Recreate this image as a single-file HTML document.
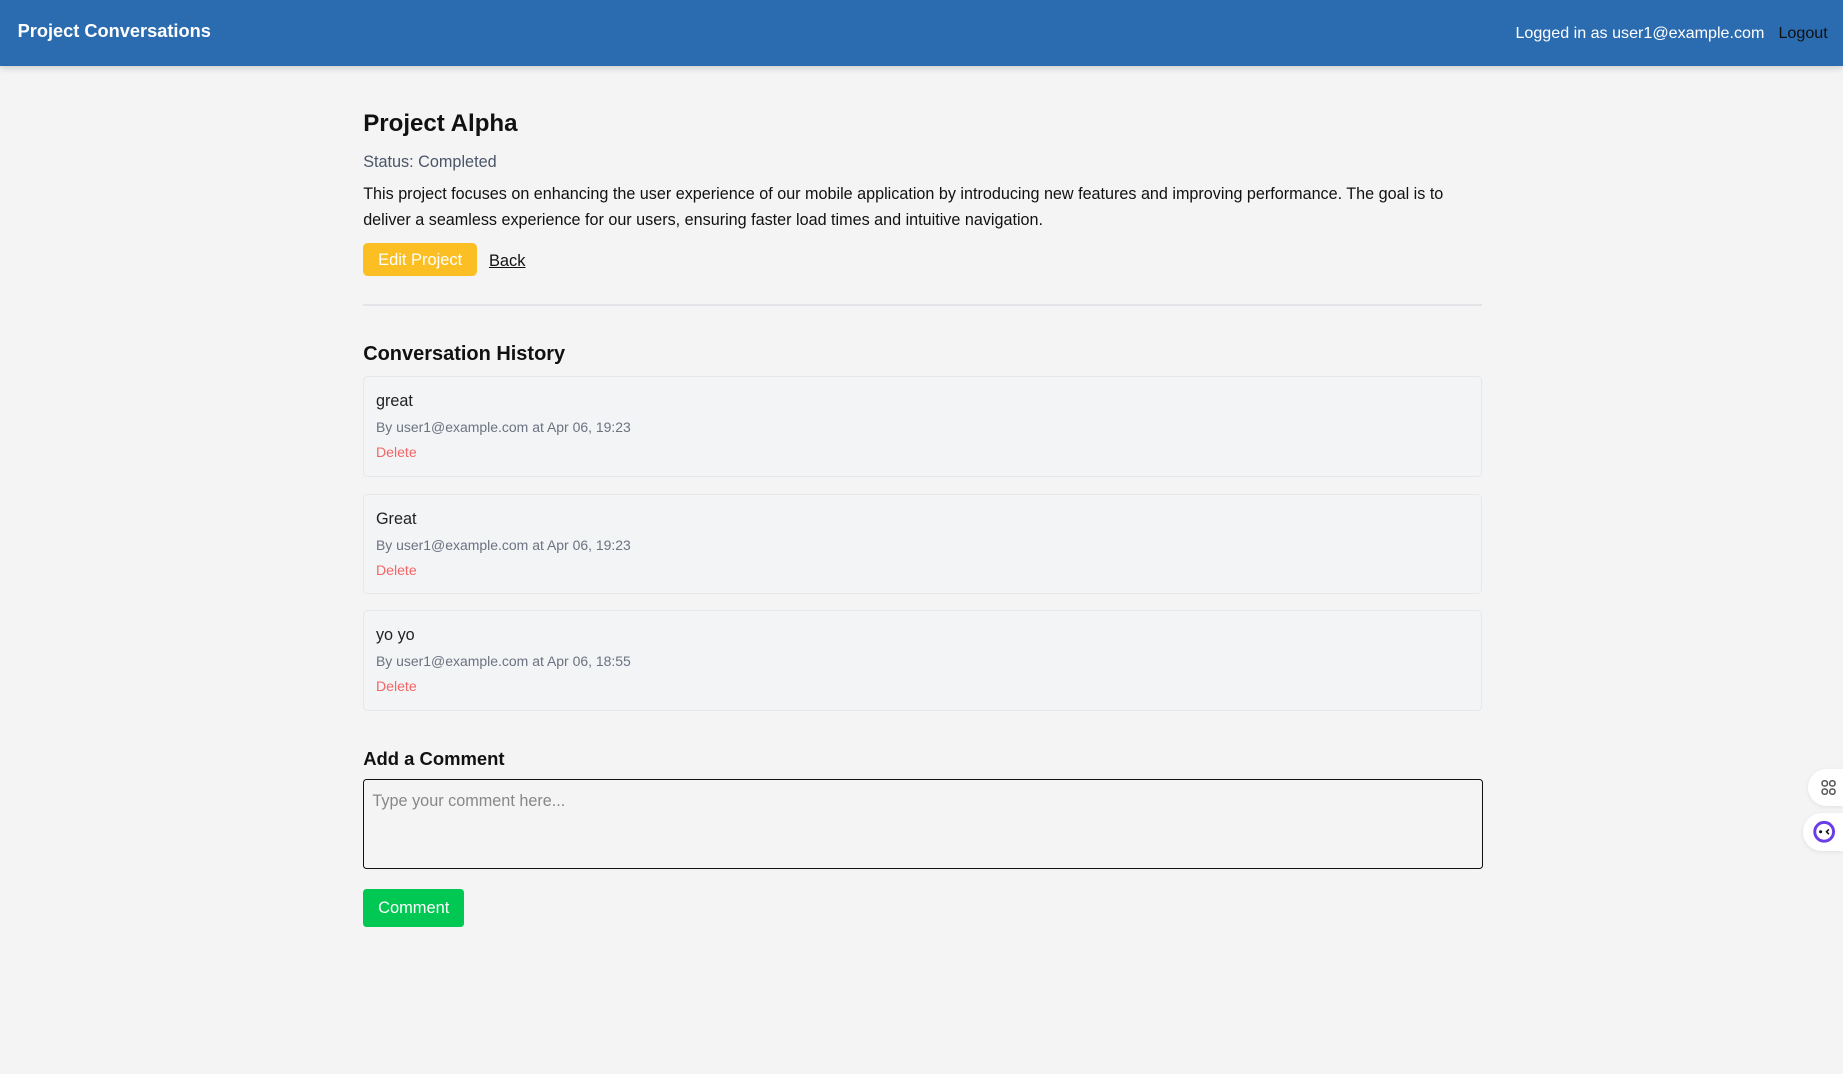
<!DOCTYPE html>
<html><head><meta charset="utf-8"><style>
html,body{margin:0;padding:0;background:#f4f4f4;width:1843px;height:1074px;overflow:hidden}
#w{zoom:1.17538;width:1568px;height:914px;position:relative;font-family:"Liberation Sans",Arial,sans-serif;color:#111}
.hd{position:absolute;left:0;top:0;width:1568px;height:56px;background:#2b6cb0;box-shadow:0 2px 5px rgba(0,0,0,.15)}
.hd .t{position:absolute;left:15px;top:18px;color:#fff;font-weight:bold;font-size:15.5px}
.hd .r{position:absolute;right:13px;top:20px;font-size:13.7px;color:#fff}
.hd .r span{color:#111;margin-left:12px}
.m{position:absolute;left:309px;top:0;width:952px}
h1{position:absolute;top:94px;margin:0;font-size:20.5px}
.st{position:absolute;top:130px;font-size:13.8px;color:#4a5568}
.ds{position:absolute;top:155px;font-size:13.75px;line-height:22px;width:935px}
.eb{position:absolute;top:207px;left:0;width:97px;height:28px;background:#fbbf24;color:#fff;border-radius:4px;font-size:14px;line-height:29px;text-align:center}
.bk{position:absolute;top:214px;left:107px;font-size:14px;text-decoration:underline}
.hr{position:absolute;top:259px;left:0;width:952px;height:1px;background:#e2e4e8}
h2{position:absolute;top:292px;margin:0;font-size:17px}
.c{position:absolute;left:0;width:950px;height:84px;background:#f3f4f6;border:1px solid #e5e7eb;border-radius:4px}
.c .a{position:absolute;left:10px;top:13px;font-size:13.8px;color:#222}
.c .b{position:absolute;left:10px;top:36px;font-size:11.9px;color:#6b7280}
.c .d{position:absolute;left:10px;top:57px;font-size:12px;color:#f56565}
h3{position:absolute;top:636px;margin:0;font-size:15.7px}
.ta{position:absolute;top:663px;left:0;width:951px;height:75px;border:1px solid #111;border-radius:3px}
.ta span{position:absolute;left:7px;top:10px;font-size:13.8px;color:#888}
.cb{position:absolute;top:756px;left:0;width:86px;height:33px;background:#00c853;border-radius:3px;color:#fff;font-size:14px;line-height:33px;text-align:center}
.f{position:absolute;right:0;width:34px;height:32px;background:#fff;border-radius:16px 0 0 16px;box-shadow:0 1px 4px rgba(0,0,0,.08)}
</style></head><body><div id="w">
<div class="hd"><div class="t">Project Conversations</div><div class="r">Logged in as user1@example.com<span>Logout</span></div></div>
<div class="m">
<h1>Project Alpha</h1>
<div class="st">Status: Completed</div>
<div class="ds">This project focuses on enhancing the user experience of our mobile application by introducing new features and improving performance. The goal is to deliver a seamless experience for our users, ensuring faster load times and intuitive navigation.</div>
<div class="eb">Edit Project</div><div class="bk">Back</div>
<div class="hr"></div>
<h2>Conversation History</h2>
<div class="c" style="top:320px"><div class="a">great</div><div class="b">By user1@example.com at Apr 06, 19:23</div><div class="d">Delete</div></div>
<div class="c" style="top:420px"><div class="a">Great</div><div class="b">By user1@example.com at Apr 06, 19:23</div><div class="d">Delete</div></div>
<div class="c" style="top:519px"><div class="a">yo yo</div><div class="b">By user1@example.com at Apr 06, 18:55</div><div class="d">Delete</div></div>
<h3>Add a Comment</h3>
<div class="ta"><span>Type your comment here...</span></div>
<div class="cb">Comment</div>
</div>
<div class="f" style="top:654px;width:30px;border-radius:16px 0 0 16px"><svg width="30" height="32" viewBox="0 0 30 32"><g fill="none" stroke="#555" stroke-width="1.3"><rect x="12" y="10" width="4.5" height="4.5" rx="2"/><rect x="18.5" y="10" width="4.5" height="4.5" rx="2"/><rect x="12" y="17" width="4.5" height="4.5" rx="2"/><rect x="18.5" y="17" width="4.5" height="4.5" rx="2"/></g></svg></div>
<div class="f" style="top:692px"><svg width="34" height="32" viewBox="0 0 34 32"><circle cx="18" cy="16" r="8" fill="#fff" stroke="#6a3de8" stroke-width="2.5"/><circle cx="15" cy="16" r="1.3" fill="#111"/><path d="M22 14 l-2 2 l2 2" stroke="#111" stroke-width="1.3" fill="none"/></svg></div>
</div></body></html>
